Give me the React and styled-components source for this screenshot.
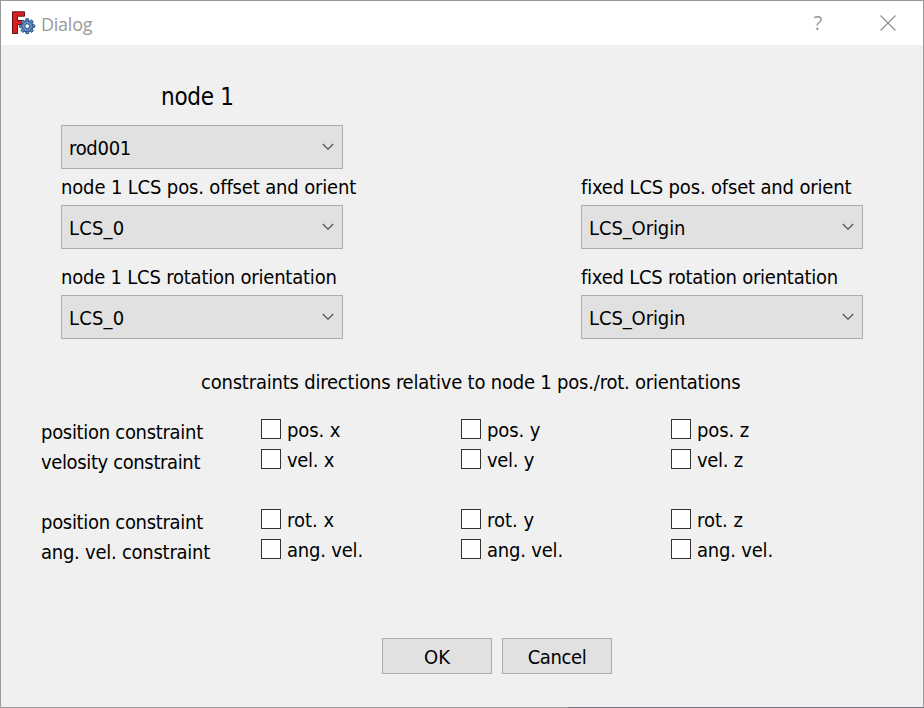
import React from 'react';
import styled, { createGlobalStyle } from 'styled-components';

const GlobalStyle = createGlobalStyle`
  * { box-sizing: border-box; }
  body { margin: 0; overflow: hidden; }
`;

const Frame = styled.div`
  width: 924px;
  height: 708px;
  padding: 1px;
  background: linear-gradient(90deg, #9c9c9c 568px, #747482 568px) bottom / 100% 1px no-repeat, #999;
`;

const Dialog = styled.div`
  height: 706px;
  background: #f0f0f0;
  color: #000;
  font-family: "DejaVu Sans Condensed", "DejaVu Sans", sans-serif;
  font-size: 20px;
  white-space: nowrap;
`;

const TitleBar = styled.header`
  display: flex;
  align-items: center;
  height: 44px;
  padding-left: 10px;
  background: #fff;
`;

const Title = styled.div`
  flex: 1;
  padding: 1px 0 0 5px;
  color: #999;
  font-family: "Open Sans", sans-serif;
  font-size: 18px;
  line-height: 26px;
  letter-spacing: -0.25px;
`;

const TitleButton = styled.button`
  display: flex;
  align-items: center;
  justify-content: center;
  width: 70px;
  height: 44px;
  padding: 0;
  border: 0;
  background: none;
  color: #999;
  font: 20px/24px "Open Sans", sans-serif;
`;

const Text = styled.span`
  letter-spacing: ${(p) => p.$track || 0}px;
`;

const Selectors = styled.section`
  display: flex;
  justify-content: space-between;
  align-items: flex-end;
  height: 294px;
  padding: 0 60px;
`;

const Column = styled.div`
  width: 282px;
`;

const Heading = styled.h1`
  margin: 0 0 13px 100px;
  font-size: 24px;
  font-weight: 400;
  line-height: 30px;
  letter-spacing: -0.3px;
`;

const Label = styled.label`
  display: block;
  padding-top: ${(p) => (p.$spaced ? 10 : 0)}px;
  line-height: 36px;
`;

const Combo = styled.button`
  display: flex;
  align-items: center;
  justify-content: space-between;
  width: 282px;
  height: 44px;
  padding: 2px 8px 0 7px;
  border: 1px solid #adadad;
  background: #e1e1e1;
  color: #000;
  font: inherit;
  svg { margin-top: -3px; }
`;

const Caption = styled.div`
  margin: 28px 0 18px 200px;
  line-height: 30px;
`;

const Constraints = styled.section`
  display: grid;
  grid-template-columns: 220px 200px 210px 200px;
  grid-template-rows: 30px 60px 30px 30px;
  padding-left: 40px;
  line-height: 30px;
`;

const RowName = styled.div`
  padding-top: 2px;
`;

const Option = styled.label`
  display: flex;
  align-items: flex-start;
  gap: 6px;
`;

const Check = styled.input`
  appearance: none;
  width: 20px;
  height: 20px;
  margin: 4px 0 0;
  border: 1px solid #333;
  background: #fff;
`;

const Actions = styled.footer`
  display: flex;
  gap: 10px;
  margin-top: 73px;
  padding-left: 381px;
`;

const PushButton = styled.button`
  width: 110px;
  height: 36px;
  padding: 1px 0 0;
  border: 1px solid #adadad;
  background: #e1e1e1;
  color: #000;
  font: inherit;
`;

const teeth = [0, 45, 90, 135, 180, 225, 270, 315];

const Logo = () => (
  <svg width="25" height="25" viewBox="0 0 25 25">
    <path d="M1.5 .8H13.5V5.2H6.5V9.5H11.5V13.5H6.5V22.5H1.5Z" fill="#d81e1e" stroke="#6b1010" />
    <g transform="translate(16.2 15.2)">
      {teeth.map((a) => (
        <path key={a} d="M-1.9 -4.5L-1.2 -7.5H1.2L1.9 -4.5Z" fill="#5f8fcb" stroke="#27436f" strokeWidth=".9" transform={`rotate(${a})`} />
      ))}
      <circle r="5.3" fill="#5f8fcb" stroke="#27436f" strokeWidth=".6" />
      <circle r="2.4" fill="#fff" stroke="#27436f" strokeWidth=".9" />
    </g>
  </svg>
);

const Chevron = () => (
  <svg width="12" height="8" viewBox="0 0 12 8">
    <path d="M.8 1L6 6.2L11.2 1" fill="none" stroke="#505050" strokeWidth="1.2" />
  </svg>
);

const Select = ({ value, track }) => (
  <Combo type="button">
    <Text $track={track}>{value}</Text>
    <Chevron />
  </Combo>
);

const rows = [
  ['position constraint', -0.3, ['pos. x', 'pos. y', 'pos. z'], -0.1],
  ['velosity constraint', -0.37, ['vel. x', 'vel. y', 'vel. z'], -0.3],
  ['position constraint', -0.3, ['rot. x', 'rot. y', 'rot. z'], 0],
  ['ang. vel. constraint', -0.25, ['ang. vel.', 'ang. vel.', 'ang. vel.'], -0.2],
];

export default function App() {
  return (
    <Frame>
      <GlobalStyle />
      <Dialog role="dialog">
        <TitleBar>
          <Logo />
          <Title>Dialog</Title>
          <TitleButton aria-label="Help">?</TitleButton>
          <TitleButton aria-label="Close">
            <svg width="16" height="16" viewBox="0 0 16 16">
              <path d="M.5 .5L15.5 15.5M15.5 .5L.5 15.5" stroke="#8c8c8c" strokeWidth="1.1" />
            </svg>
          </TitleButton>
        </TitleBar>
        <Selectors>
          <Column>
            <Heading>node 1</Heading>
            <Select value="rod001" track={-0.3} />
            <Label><Text $track={-0.15}>node 1 LCS pos. offset and orient</Text></Label>
            <Select value="LCS_0" track={0.2} />
            <Label $spaced><Text $track={-0.21}>node 1 LCS rotation orientation</Text></Label>
            <Select value="LCS_0" track={0.2} />
          </Column>
          <Column>
            <Label><Text $track={-0.17}>fixed LCS pos. ofset and orient</Text></Label>
            <Select value="LCS_Origin" track={-0.1} />
            <Label $spaced><Text $track={-0.23}>fixed LCS rotation orientation</Text></Label>
            <Select value="LCS_Origin" track={-0.1} />
          </Column>
        </Selectors>
        <Caption>
          <Text $track={-0.205}>constraints directions relative to node 1 pos./rot. orientations</Text>
        </Caption>
        <Constraints>
          {rows.map(([name, track, options, optionTrack], i) => (
            <React.Fragment key={i}>
              <RowName><Text $track={track}>{name}</Text></RowName>
              {options.map((option, j) => (
                <Option key={j}>
                  <Check type="checkbox" />
                  <Text $track={optionTrack}>{option}</Text>
                </Option>
              ))}
            </React.Fragment>
          ))}
        </Constraints>
        <Actions>
          <PushButton><Text>OK</Text></PushButton>
          <PushButton><Text $track={-0.4}>Cancel</Text></PushButton>
        </Actions>
      </Dialog>
    </Frame>
  );
}
